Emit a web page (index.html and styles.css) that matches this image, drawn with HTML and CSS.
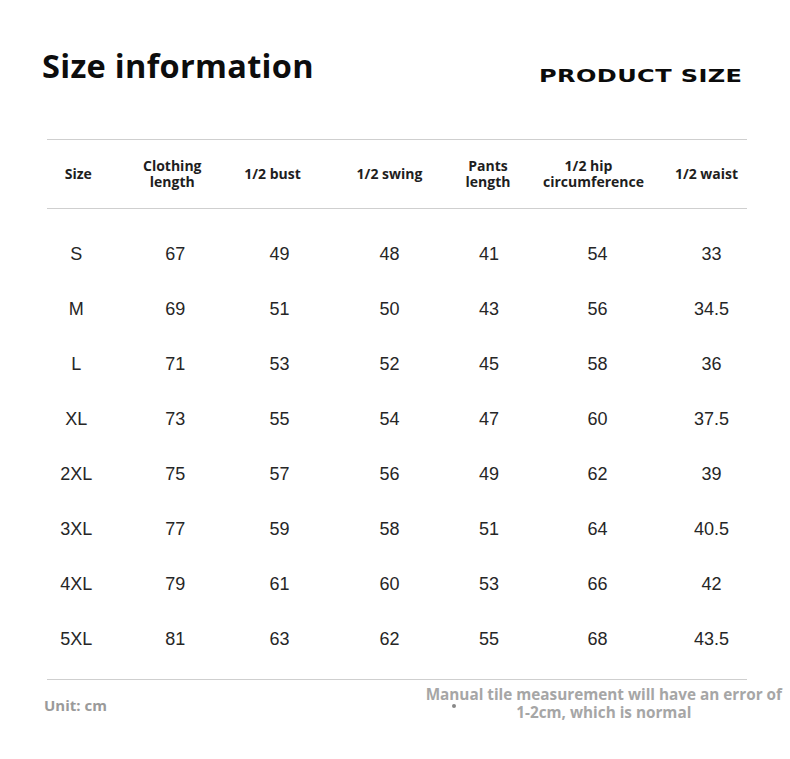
FILE: index.html
```html
<!DOCTYPE html>
<html>
<head>
<meta charset="utf-8">
<link rel="stylesheet" href="styles.css">
</head>
<body>
<div class="page">
  <header class="top">
    <h1 class="title">Size information</h1>
    <div class="brand"><span class="brand-text">PRODUCT SIZE</span></div>
  </header>

  <section class="table">
    <div class="row head">
      <div class="cell">Size</div>
      <div class="cell">Clothing<br>length</div>
      <div class="cell">1/2 bust</div>
      <div class="cell">1/2 swing</div>
      <div class="cell">Pants<br>length</div>
      <div class="cell">1/2 hip<br>circumference</div>
      <div class="cell">1/2 waist</div>
    </div>
    <div class="body">
      <div class="row data"><div class="cell">S</div><div class="cell">67</div><div class="cell">49</div><div class="cell">48</div><div class="cell">41</div><div class="cell">54</div><div class="cell">33</div></div>
      <div class="row data"><div class="cell">M</div><div class="cell">69</div><div class="cell">51</div><div class="cell">50</div><div class="cell">43</div><div class="cell">56</div><div class="cell">34.5</div></div>
      <div class="row data"><div class="cell">L</div><div class="cell">71</div><div class="cell">53</div><div class="cell">52</div><div class="cell">45</div><div class="cell">58</div><div class="cell">36</div></div>
      <div class="row data"><div class="cell">XL</div><div class="cell">73</div><div class="cell">55</div><div class="cell">54</div><div class="cell">47</div><div class="cell">60</div><div class="cell">37.5</div></div>
      <div class="row data"><div class="cell">2XL</div><div class="cell">75</div><div class="cell">57</div><div class="cell">56</div><div class="cell">49</div><div class="cell">62</div><div class="cell">39</div></div>
      <div class="row data"><div class="cell">3XL</div><div class="cell">77</div><div class="cell">59</div><div class="cell">58</div><div class="cell">51</div><div class="cell">64</div><div class="cell">40.5</div></div>
      <div class="row data"><div class="cell">4XL</div><div class="cell">79</div><div class="cell">61</div><div class="cell">60</div><div class="cell">53</div><div class="cell">66</div><div class="cell">42</div></div>
      <div class="row data"><div class="cell">5XL</div><div class="cell">81</div><div class="cell">63</div><div class="cell">62</div><div class="cell">55</div><div class="cell">68</div><div class="cell">43.5</div></div>
    </div>
  </section>

  <footer class="foot">
    <div class="unit">Unit: cm</div>
    <div class="note">Manual tile measurement will have an error of<br>1-2cm, which is normal<span class="dot"></span></div>
  </footer>
</div>
</body>
</html>
```

FILE: styles.css
```css
* { box-sizing: border-box; margin: 0; padding: 0; }
html, body { background: #fff; }
body { width: 790px; height: 759px; overflow: hidden; font-family: "Open Sans", sans-serif; color: #111; }

.top {
  display: flex;
  justify-content: space-between;
  align-items: flex-start;
  height: 139px;
  padding: 44px 48px 0 42px;
}
.title {
  font-family: "Open Sans", sans-serif;
  font-weight: 700;
  font-size: 32.5px;
  letter-spacing: 0.3px;
  line-height: 44px;
  color: #0d0d0d;
}
.brand {
  padding-top: 21px;
  width: 205px;
  text-align: right;
}
.brand-text {
  display: inline-block;
  font-family: "DejaVu Sans", sans-serif;
  font-weight: 700;
  font-size: 18.5px;
  line-height: 20px;
  letter-spacing: 0.3px;
  transform: scaleX(1.3);
  transform-origin: right center;
  color: #0b0b0b;
}

.table {
  margin: 0 43px 0 47px;
  border-top: 1px solid #cfcfcf;
  border-bottom: 1px solid #cfcfcf;
}
.row {
  display: grid;
  grid-template-columns: 78.5px 101.5px 107px 105px 104px 111px 93px;
}
.cell { text-align: center; }

.head {
  height: 69px;
  align-items: center;
  border-bottom: 1px solid #cfcfcf;
  font-weight: 700;
  font-size: 14px;
  line-height: 16.5px;
  color: #1e1e1e;
}
.head .cell:nth-child(1) { padding-right: 16px; }
.head .cell:nth-child(2) { padding-right: 8px; }
.head .cell:nth-child(3) { padding-right: 16px; }
.head .cell:nth-child(4) { padding-left: 6px; }
.head .cell:nth-child(5) { padding-right: 6px; }
.head .cell:nth-child(6) { padding-right: 20px; }
.head .cell:nth-child(7) { padding-left: 12px; }

.body { padding: 18px 0 12px; }
.data {
  height: 55px;
  align-items: center;
  font-family: "Liberation Sans", sans-serif;
  font-size: 18px;
  color: #262626;
}
.data .cell:nth-child(1) { padding-right: 20px; }
.data .cell:nth-child(2) { padding-right: 2px; }
.data .cell:nth-child(3) { padding-right: 2px; }
.data .cell:nth-child(4) { padding-left: 6px; }
.data .cell:nth-child(5) { padding-right: 4px; }
.data .cell:nth-child(6) { padding-right: 2px; }
.data .cell:nth-child(7) { padding-left: 22px; }

.foot {
  display: flex;
  justify-content: space-between;
  padding: 6px 8px 0 44px;
}
.unit {
  padding-top: 9px;
  font-weight: 700;
  font-size: 15px;
  color: #9a9a9a;
}
.note {
  position: relative;
  text-align: center;
  font-weight: 700;
  font-size: 15.3px;
  line-height: 17.5px;
  color: #a6a6a6;
}
.dot {
  position: absolute;
  left: 26px;
  top: 18px;
  width: 4px;
  height: 4px;
  border-radius: 50%;
  background: #888;
}
```
